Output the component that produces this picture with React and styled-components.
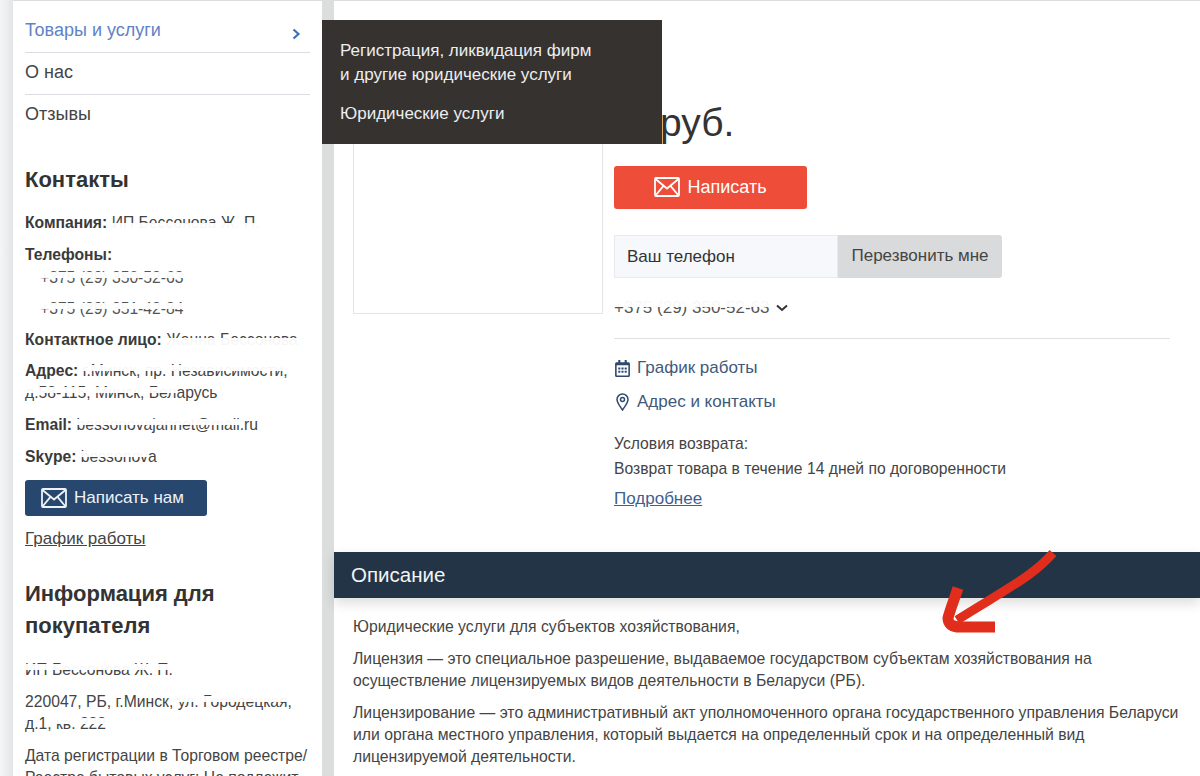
import React from "react";
import styled, { createGlobalStyle } from "styled-components";
import { FaRegCalendarAlt } from "react-icons/fa";

const GlobalStyle = createGlobalStyle`
  html, body {
    margin: 0;
    padding: 0;
    background: #fff;
  }
  body {
    font-family: "Liberation Sans", Arial, sans-serif;
    color: #3a3a3a;
  }
`;

function MailIcon({ size = 26 }) {
  return (
    <svg width={size} height={size * 0.77} viewBox="0 0 26 20" fill="none" stroke="currentColor" strokeWidth="1.8">
      <rect x="1" y="1" width="24" height="18" rx="1" />
      <path d="M1.5 2 L13 11.5 L24.5 2" />
      <path d="M1.5 18.5 L9.5 8.8 M24.5 18.5 L16.5 8.8" />
    </svg>
  );
}

function PinIcon() {
  return (
    <svg width="17" height="18" viewBox="0 0 16 18" fill="none" stroke="#2f4a6d" strokeWidth="1.5">
      <path d="M8 17 C5 12.5 2.5 9.8 2.5 6.5 A5.5 5.5 0 0 1 13.5 6.5 C13.5 9.8 11 12.5 8 17 Z" />
      <circle cx="8" cy="6.5" r="2" />
    </svg>
  );
}

function App() {
  return (
    <Page>
      <GlobalStyle />
      <Sidebar>
        <Menu>
          <MenuItem $active>
            Товары и услуги
            <MenuArrow viewBox="0 0 10 12" fill="none" stroke="#3f6fb5" strokeWidth="2.2">
              <path d="M2.5 1.5 L7.5 6 L2.5 10.5" />
            </MenuArrow>
          </MenuItem>
          <MenuItem>О нас</MenuItem>
          <MenuItem $last>Отзывы</MenuItem>
        </Menu>

        <SideTitle>Контакты</SideTitle>
        <InfoRow>
          <b>Компания:</b> <Smudge $top={9} $h={9}>ИП Бессонова Ж. П.</Smudge>
        </InfoRow>
        <InfoRow>
          <b>Телефоны:</b>
        </InfoRow>
        <Phones>
          <PhoneRow>
            <Smudge>+375 (29) 350-52-63</Smudge>
          </PhoneRow>
          <PhoneRow>
            <Smudge>+375 (29) 351-42-84</Smudge>
          </PhoneRow>
        </Phones>
        <InfoRow $compact>
          <b>Контактное лицо:</b> <Smudge $top={7} $h={7}>Жанна Бессонова</Smudge>
        </InfoRow>
        <InfoRow>
          <b>Адрес:</b> <Smudge>г.Минск, пр. Независимости,</Smudge>
          <br />
          <Smudge>д.58-115, Минск, Бел</Smudge>арусь
        </InfoRow>
        <InfoRow>
          <b>Email:</b> <Smudge>bessonovajannet@mail</Smudge>.ru
        </InfoRow>
        <InfoRow>
          <b>Skype:</b> <Smudge>bessonov</Smudge>a
        </InfoRow>
        <WriteUsButton>
          <MailIcon />
          Написать нам
        </WriteUsButton>
        <ScheduleLink>График работы</ScheduleLink>

        <BuyerTitle>Информация для покупателя</BuyerTitle>
        <BuyerText>
          <Smudge>ИП Бессонова Ж. П.</Smudge>
        </BuyerText>
        <BuyerText>
          220047, РБ, г.Минск, <Smudge>ул. Городецкая,</Smudge>
          <br />
          д.1<Smudge>, кв. 222</Smudge>
        </BuyerText>
        <BuyerText>
          Дата регистрации в Торговом реестре/
          <br />
          Реестре бытовых услуг: Не подлежит
        </BuyerText>
      </Sidebar>

      <Main>
        <Product>
          <PhotoBox />
          <Details>
            <Price>руб.</Price>
            <WriteButton>
              <MailIcon />
              Написать
            </WriteButton>
            <CallbackRow>
              <PhoneInput>Ваш телефон</PhoneInput>
              <CallbackButton>Перезвонить мне</CallbackButton>
            </CallbackRow>
            <PhoneLine>
              <Smudge>+375 (29) 350-52-63</Smudge>
              <svg width="12" height="8" viewBox="0 0 12 8" fill="none" stroke="#333" strokeWidth="2">
                <path d="M1 1.5 L6 6 L11 1.5" />
              </svg>
            </PhoneLine>
            <Divider />
            <IconLink>
              <FaRegCalendarAlt size={17} color="#2f4a6d" />
              График работы
            </IconLink>
            <IconLink>
              <PinIcon />
              Адрес и контакты
            </IconLink>
            <ReturnText>
              Условия возврата:
              <br />
              Возврат товара в течение 14 дней по договоренности
            </ReturnText>
            <MoreLink>Подробнее</MoreLink>
          </Details>
        </Product>

        <SectionHeader>Описание</SectionHeader>
        <Description>
          <p>Юридические услуги для субъектов хозяйствования,</p>
          <p>
            Лицензия — это специальное разрешение, выдаваемое государством субъектам хозяйствования на
            осуществление лицензируемых видов деятельности в Беларуси (РБ).
          </p>
          <p>
            Лицензирование — это административный акт уполномоченного органа государственного управления Беларуси
            или органа местного управления, который выдается на определенный срок и на определенный вид
            лицензируемой деятельности.
          </p>
        </Description>
      </Main>

      <Flyout>
        <FlyoutItem>
          Регистрация, ликвидация фирм
          <br />и другие юридические услуги
        </FlyoutItem>
        <FlyoutItem>Юридические услуги</FlyoutItem>
      </Flyout>

      <Arrow viewBox="0 0 130 100" fill="none" stroke="#e02d1c">
        <path d="M115 5 C 95 28 70 40 19 72" strokeWidth="9" />
        <path d="M20 40 C 16 52 12 62 10 70 C 10 76 14 79 22 79 L 57 79" strokeWidth="11" />
      </Arrow>
    </Page>
  );
}

export default App;

const Page = styled.div`
  position: relative;
  display: flex;
  width: 1200px;
  height: 776px;
  overflow: hidden;
  padding: 1px 0 0 13px;
  box-sizing: border-box;
  background: linear-gradient(to right, #f4f5f7 0, #e4e5e7 13px, #dcdddd 14px);
`;

const Sidebar = styled.aside`
  flex: none;
  width: 309px;
  height: 900px;
  margin-right: 12px;
  padding: 9px 12px 0;
  box-sizing: border-box;
  background: #fff;
  font-size: 15.7px;
`;

const Menu = styled.div`
  display: flex;
  flex-direction: column;
`;

const MenuItem = styled.div`
  position: relative;
  height: 42px;
  margin-bottom: -1px;
  line-height: 40px;
  font-size: 18px;
  color: ${(props) => (props.$active ? "#5f82c6" : "#444")};
  border-bottom: ${(props) => (props.$last ? "none" : "1px solid #dcdde2")};
`;

const MenuArrow = styled.svg`
  position: absolute;
  right: 9px;
  top: 18px;
  width: 10px;
  height: 12px;
`;

const SideTitle = styled.h2`
  margin: 31px 0 18px;
  font-size: 22px;
  line-height: 28px;
  font-weight: 700;
  color: #333;
`;

const InfoRow = styled.div`
  margin-bottom: ${(props) => (props.$compact ? "9px" : "10px")};
  line-height: 22px;
  color: #444;
  b {
    color: #3a3a3a;
  }
`;

const Phones = styled.div`
  margin: -9px 0 1px;
`;

const PhoneRow = styled.div`
  margin-bottom: 9px;
  padding-left: 15px;
  line-height: 22px;
  color: #555;
`;

const Smudge = styled.span`
  position: relative;
  font-weight: 400;
  &::after {
    content: "";
    position: absolute;
    left: 0;
    right: 0;
    top: ${(props) => props.$top ?? 3}px;
    height: ${(props) => props.$h ?? 6}px;
    background: rgba(255, 255, 255, 0.95);
  }
`;

const WriteUsButton = styled.div`
  display: flex;
  align-items: center;
  gap: 7px;
  width: 182px;
  height: 36px;
  margin-top: 12px;
  padding-left: 16px;
  box-sizing: border-box;
  border-radius: 3px;
  background: #27476f;
  color: #eef2f6;
  font-size: 17px;
`;

const ScheduleLink = styled.div`
  margin-top: 12px;
  line-height: 22px;
  font-size: 17px;
  text-decoration: underline;
  color: #444;
`;

const BuyerTitle = styled.h2`
  margin: 28px 0 17px;
  font-size: 22px;
  line-height: 32px;
  font-weight: 700;
  color: #333;
`;

const BuyerText = styled.div`
  margin-bottom: 10px;
  font-size: 15.7px;
  line-height: 22px;
  white-space: nowrap;
  color: #444;
`;

const Main = styled.main`
  flex: 1;
  min-width: 0;
  height: 900px;
  background: #fff;
`;

const Product = styled.section`
  display: flex;
  gap: 11px;
  height: 551px;
  padding: 0 30px 0 19px;
  box-sizing: border-box;
`;

const PhotoBox = styled.div`
  flex: none;
  width: 250px;
  height: 201px;
  margin-top: 112px;
  border: 1px solid #e4e5e7;
  box-sizing: border-box;
`;

const Details = styled.div`
  flex: 1;
  padding-top: 99px;
`;

const Price = styled.div`
  padding-left: 46px;
  font-size: 39px;
  line-height: 46px;
  color: #333;
`;

const WriteButton = styled.div`
  display: flex;
  align-items: center;
  justify-content: center;
  gap: 7px;
  width: 193px;
  height: 43px;
  margin-top: 20px;
  border-radius: 3px;
  background: #ee4d3a;
  color: #fff;
  font-size: 18px;
`;

const CallbackRow = styled.div`
  display: flex;
  width: 388px;
  height: 43px;
  margin-top: 26px;
`;

const PhoneInput = styled.div`
  flex: none;
  width: 224px;
  padding-left: 12px;
  box-sizing: border-box;
  background: #f6f8fc;
  border: 1px solid #e8eaee;
  line-height: 41px;
  font-size: 17px;
  color: #333;
`;

const CallbackButton = styled.div`
  flex: 1;
  background: #d9dadb;
  border-radius: 0 3px 3px 0;
  text-align: center;
  line-height: 41px;
  font-size: 17px;
  color: #444;
`;

const PhoneLine = styled.div`
  display: flex;
  align-items: center;
  gap: 7px;
  height: 22px;
  margin-top: 19px;
  font-size: 17px;
  color: #555;
`;

const Divider = styled.div`
  height: 1px;
  margin: 19px 0 18px;
  background: #dfe0e4;
`;

const IconLink = styled.div`
  display: flex;
  align-items: center;
  gap: 6px;
  height: 22px;
  margin-top: 12px;
  font-size: 17px;
  color: #41597a;
`;

const ReturnText = styled.div`
  margin-top: 18px;
  font-size: 15.7px;
  line-height: 25px;
  color: #444;
`;

const MoreLink = styled.div`
  margin-top: 7px;
  font-size: 17px;
  line-height: 22px;
  color: #3f5f8f;
  text-decoration: underline;
`;

const SectionHeader = styled.div`
  height: 46px;
  padding-left: 17px;
  background: #243447;
  box-shadow: 0 5px 12px rgba(0, 0, 0, 0.14);
  color: #f2f4f6;
  font-size: 20.5px;
  line-height: 46px;
`;

const Description = styled.div`
  padding: 18px 19px 0;
  font-size: 15.75px;
  line-height: 22px;
  color: #444;
  p {
    margin: 0 0 10px;
  }
`;

const Flyout = styled.div`
  position: absolute;
  left: 322px;
  top: 20px;
  width: 340px;
  height: 124px;
  padding: 19px 18px 0;
  box-sizing: border-box;
  background: #353230;
  color: #eee;
  font-size: 17px;
  line-height: 24px;
`;

const FlyoutItem = styled.div`
  margin-bottom: 15px;
`;

const Arrow = styled.svg`
  position: absolute;
  left: 938px;
  top: 548px;
  width: 130px;
  height: 100px;
`;
